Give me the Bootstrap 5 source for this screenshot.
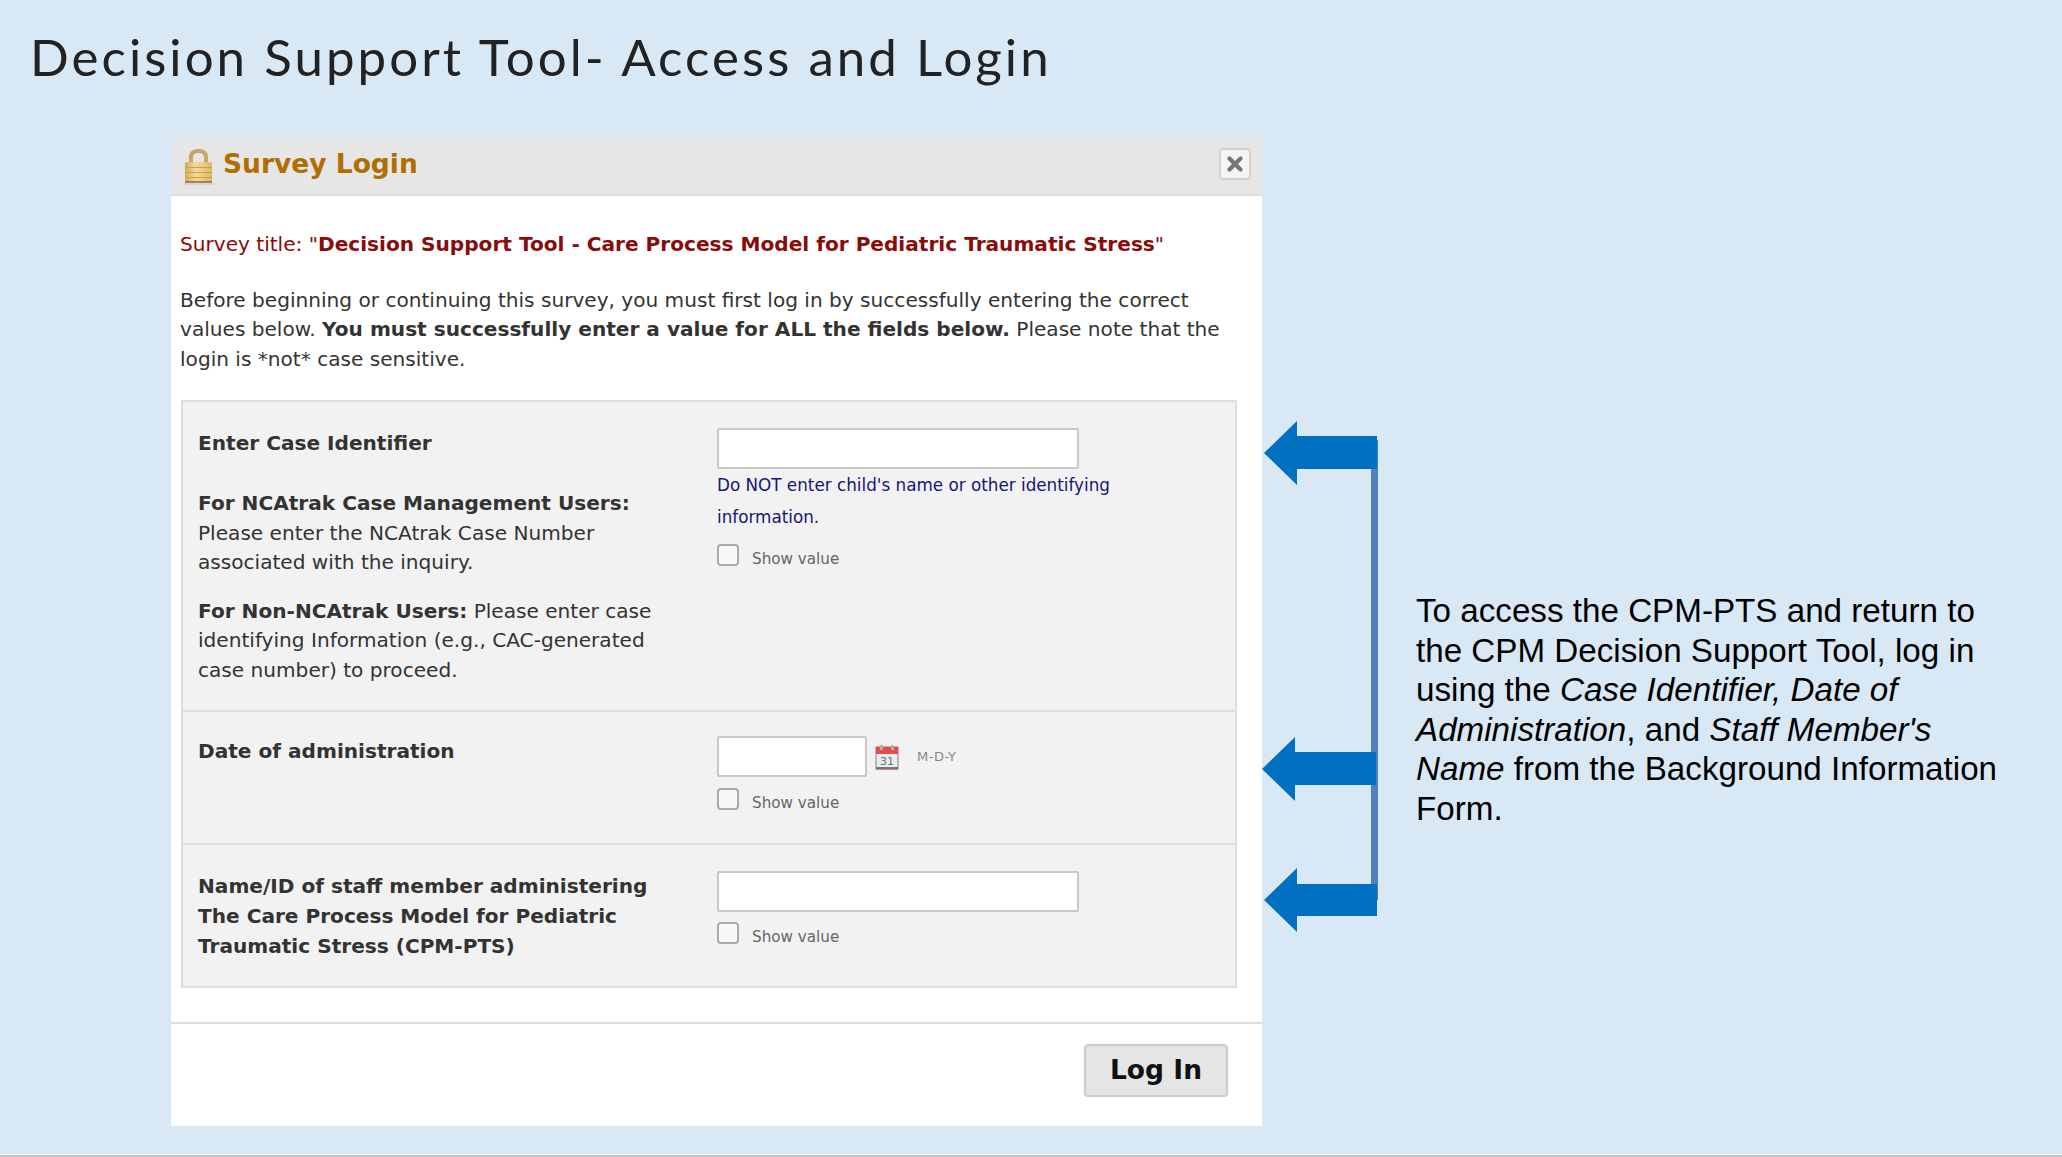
<!DOCTYPE html>
<html lang="en">
<head>
<meta charset="utf-8">
<title>Decision Support Tool- Access and Login</title>
<link href="https://cdn.jsdelivr.net/npm/bootstrap@5.3.0/dist/css/bootstrap.min.css" rel="stylesheet">
<style>
html,body{height:100%}
body{background:#d9e8f5;margin:0;overflow:hidden;font-family:"DejaVu Sans",sans-serif;color:#333}
.slide{width:2062px;height:1157px;border-bottom:2px solid #c4c4c4;box-shadow:inset 0 -1px 0 #fff}
.slide-title{font-family:Lato,"Open Sans",sans-serif;font-weight:400;font-size:51px;letter-spacing:3.06px;line-height:62px;color:#222;margin:0;padding:26px 0 0 30px;height:138px}
.stage{align-items:flex-start}
.dlg{margin-left:171px;width:1091px;height:988px;background:#fff;font-size:20.1px;line-height:29.6px}
.dlg-head{height:58px;background:#e6e6e6;border-bottom:2px solid #ddd;padding:0 11px 0 11px}
.dlg-name{font-weight:700;font-size:26.5px;color:#b06f00;line-height:1;margin-left:8px;margin-bottom:3px}
.dlg-x{width:32px;height:32px;background:#f4f4f4;border:2px solid #d2d2d2;border-radius:4px;padding:0;margin-bottom:5px}
.dlg-body{padding:34px 22px 0 9px;height:826px}
.sv-title{color:#8b0a0a;margin-bottom:26px}
.intro{margin-bottom:26px}
.fields{margin-left:1px;width:1056px;background:#f2f2f2;border:2px solid #ddd;height:588px}
.fld{border-bottom:2px solid #ddd;padding:0 15px}
.fld:last-child{border-bottom:0}
.fld-a{height:310px;padding-top:27px}
.fld-b{height:133px;padding-top:25px}
.fld-c{height:141px;padding-top:27px}
.lbl{width:519px;flex:none;color:#333}
.lbl p{margin:0 0 19px}
.lbl p.first{margin-bottom:30px}
.ctl{flex:1}
.fld .form-control{border-radius:2px;border:2px solid #c8c8c8;box-shadow:none;padding:0;height:41px;width:362px}
.fld-b .form-control{width:150px}
.fld-a .ctl{margin-top:-1px}
.fld-b .ctl{margin-top:-1px}
.fld-c .ctl{margin-top:-1px}
.hint{color:#15157a;font-size:16.8px;line-height:31.5px;margin-top:1px;width:420px}
.showv{margin-top:11px;font-size:15.2px;color:#666;line-height:22px}
.fld-c .showv{margin-top:10px}
.showv .form-check-input{width:22px;height:22px;margin:0 13px 0 0;border:2px solid #aaa;border-radius:4px;background-color:#f7f7f7;flex:none}
.showv span{position:relative;top:4px}
.fmt{font-size:13px;color:#888;margin-left:18px;letter-spacing:.5px}
.cal{margin-left:8px}
.dlg-foot{border-top:2px solid #ddd;height:104px;padding:20px 34px 0 0}
.login-btn{background:#e5e5e5;border:2px solid #ccc;border-radius:4px;font-weight:700;font-size:26.5px;color:#111;width:144px;height:53px;padding:0;line-height:1}
.arrows{flex:none;margin-top:283px}
.note{font-family:"Liberation Sans",sans-serif;font-size:33.2px;line-height:39.5px;color:#000;width:620px;margin:453px 0 0 36px}
</style>
</head>
<body>
<div class="slide">
  <h1 class="slide-title">Decision Support Tool- Access and Login</h1>
  <div class="stage d-flex">
    <div class="dlg">
      <div class="dlg-head d-flex align-items-center">
        <svg width="33" height="38" viewBox="0 0 33 38" aria-hidden="true">
          <defs><linearGradient id="lk" x1="0" x2="1" y1="0" y2="0"><stop offset="0" stop-color="#d1ab5c"/><stop offset=".4" stop-color="#f3dc95"/><stop offset="1" stop-color="#deb868"/></linearGradient></defs>
          <path d="M7 15V10C7 4.500 11 2 16.500 2S26 4.500 26 10v5h-4V10c0-2.500-2-4-5.500-4S11 7.500 11 10v5z" fill="#c4a868"/>
          <rect x="3" y="15" width="27" height="20" rx="1.500" fill="url(#lk)"/>
          <path d="M3 20.500h27M3 25.500h27M3 30.500h27" stroke="#c9a050" stroke-width="1"/>
          <path d="M3 35h27" stroke="#8a6a35" stroke-width="1.500"/>
          <path d="M1 37h31" stroke="#cfcfcf" stroke-width="1.500"/>
        </svg>
        <span class="dlg-name flex-grow-1">Survey Login</span>
        <button type="button" class="dlg-x d-flex align-items-center justify-content-center" aria-label="Close">
          <svg width="16" height="16" viewBox="0 0 16 16" aria-hidden="true"><path d="M2.500 2.500l11 11M13.500 2.500l-11 11" stroke="#777" stroke-width="4.200" stroke-linecap="round"/></svg>
        </button>
      </div>
      <div class="dlg-body">
        <div class="sv-title">Survey title: "<b>Decision Support Tool - Care Process Model for Pediatric Traumatic Stress</b>"</div>
        <div class="intro">Before beginning or continuing this survey, you must first log in by successfully entering the correct values below. <b>You must successfully enter a value for ALL the fields below.</b> Please note that the login is *not* case sensitive.</div>
        <div class="fields">
          <div class="fld fld-a d-flex">
            <div class="lbl">
              <p class="first"><b>Enter Case Identifier</b></p>
              <p><b>For NCAtrak Case Management Users:</b><br>Please enter the NCAtrak Case Number<br>associated with the inquiry.</p>
              <p><b>For Non-NCAtrak Users:</b> Please enter case<br>identifying Information (e.g., CAC-generated<br>case number) to proceed.</p>
            </div>
            <div class="ctl">
              <input type="text" class="form-control" aria-label="Enter Case Identifier">
              <div class="hint">Do NOT enter child's name or other identifying information.</div>
              <label class="showv d-flex align-items-start"><input type="checkbox" class="form-check-input"><span>Show value</span></label>
            </div>
          </div>
          <div class="fld fld-b d-flex">
            <div class="lbl"><b>Date of administration</b></div>
            <div class="ctl">
              <div class="d-flex align-items-center">
                <input type="text" class="form-control" aria-label="Date of administration">
                <svg class="cal" width="24" height="26" viewBox="0 0 24 26" aria-hidden="true">
                  <rect x="1" y="3" width="22" height="22" fill="#e6eef0" stroke="#8a7f7f" stroke-width="1"/>
                  <rect x="1" y="3" width="22" height="7" fill="#ea4a4a"/>
                  <rect x="5" y="1" width="3" height="5" fill="#b9b0b0"/><rect x="16" y="1" width="3" height="5" fill="#b9b0b0"/>
                  <rect x="1" y="23" width="22" height="2.500" fill="#8b6f6f"/>
                  <text x="12" y="21" text-anchor="middle" font-family="DejaVu Sans" font-size="11" fill="#5f7478">31</text>
                </svg>
                <span class="fmt">M-D-Y</span>
              </div>
              <label class="showv d-flex align-items-start"><input type="checkbox" class="form-check-input"><span>Show value</span></label>
            </div>
          </div>
          <div class="fld fld-c d-flex">
            <div class="lbl"><b>Name/ID of staff member administering<br>The Care Process Model for Pediatric<br>Traumatic Stress (CPM-PTS)</b></div>
            <div class="ctl">
              <input type="text" class="form-control" aria-label="Name/ID of staff member">
              <label class="showv d-flex align-items-start"><input type="checkbox" class="form-check-input"><span>Show value</span></label>
            </div>
          </div>
        </div>
      </div>
      <div class="dlg-foot d-flex justify-content-end align-items-start">
        <button type="button" class="login-btn">Log In</button>
      </div>
    </div>
    <svg class="arrows" width="118" height="514" viewBox="1262 421 118 514" aria-hidden="true">
      <rect x="1371" y="440" width="7" height="460" fill="#4f81bd"/>
      <path d="M1264 453L1297 421V436H1377V469H1297V485Z" fill="#0070c0"/>
      <path d="M1262 769L1295 737V752H1376V785H1295V801Z" fill="#0070c0"/>
      <path d="M1264 900L1297 868V884H1377V916H1297V932Z" fill="#0070c0"/>
    </svg>
    <div class="note">To access the CPM-PTS and return to<br>the CPM Decision Support Tool, log in<br>using the <i>Case Identifier, Date of<br>Administration</i>, and <i>Staff Member's<br>Name</i> from the Background Information<br>Form.</div>
  </div>
</div>
</body>
</html>
